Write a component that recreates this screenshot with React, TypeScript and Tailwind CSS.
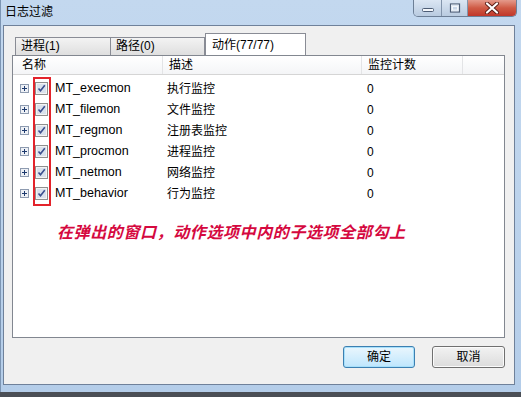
import React from 'react';

const rows = [
  { name: 'MT_execmon', desc: '执行监控', count: '0' },
  { name: 'MT_filemon', desc: '文件监控', count: '0' },
  { name: 'MT_regmon', desc: '注册表监控', count: '0' },
  { name: 'MT_procmon', desc: '进程监控', count: '0' },
  { name: 'MT_netmon', desc: '网络监控', count: '0' },
  { name: 'MT_behavior', desc: '行为监控', count: '0' },
];

function PlusBox() {
  return (
    <svg width="9" height="9" viewBox="0 0 9 9" className="shrink-0">
      <rect x="0.5" y="0.5" width="8" height="8" fill="#eef1f6" stroke="#8e9bb0" />
      <path d="M2 4.5h5M4.5 2v5" stroke="#1e3a6e" strokeWidth="1" />
    </svg>
  );
}

function CheckBox() {
  return (
    <svg width="13" height="13" viewBox="0 0 13 13" className="shrink-0">
      <rect x="0.5" y="0.5" width="12" height="12" fill="#f4f4f4" stroke="#8f8f8f" />
      <rect x="2" y="2" width="9" height="9" fill="#d9e1ec" />
      <path d="M3.5 6.5l2 2.2L9.8 3.3" stroke="#3a4f8f" strokeWidth="1.6" fill="none" />
    </svg>
  );
}

export default function App() {
  return (
    <div className="w-[521px] h-[397px] bg-[#4a4e55] overflow-hidden font-['Liberation_Sans','Noto_Sans_CJK_SC',sans-serif] text-[12px] text-black">
      <div className="h-[392px] bg-gradient-to-b from-[#c3d8ef] via-[#bcd3ec] to-[#b4cde9] border-l border-[#7c95b3]">
        {/* title bar */}
        <div className="h-[25px] flex justify-between">
          <div className="pl-[4px] pt-[5px] leading-[15px] text-[12px]">日志过滤</div>
          <div className="flex h-[17px] mr-[4px] rounded-b-[5px] overflow-hidden border border-t-0 border-[#6d7f96]">
            <div className="w-[28px] flex items-center justify-center bg-gradient-to-b from-[#dbe6f3] to-[#b9cbe0] border-r border-[#8294ab]">
              <svg width="14" height="10" viewBox="0 0 14 10">
                <rect x="1.5" y="5.5" width="11" height="3" rx="1" fill="#f4f7fb" stroke="#4d5d75" />
              </svg>
            </div>
            <div className="w-[26px] flex items-center justify-center bg-gradient-to-b from-[#dbe6f3] to-[#b9cbe0] border-r border-[#8294ab]">
              <svg width="12" height="10" viewBox="0 0 12 10">
                <rect x="1.5" y="1" width="9" height="8" fill="none" stroke="#4d5d75" strokeWidth="1.2" />
                <rect x="3.5" y="3.5" width="5" height="3.5" fill="none" stroke="#f4f7fb" />
                <rect x="2.5" y="2" width="7" height="6" fill="none" stroke="#f4f7fb" strokeWidth="0.6" />
              </svg>
            </div>
            <div className="w-[48px] flex items-center justify-center bg-gradient-to-b from-[#e49a8b] via-[#cf5a44] to-[#c0362a]">
              <svg width="16" height="12" viewBox="0 0 16 12">
                <path d="M3 1.5l10 9M13 1.5l-10 9" stroke="#5a1e17" strokeWidth="4" strokeLinecap="round" />
                <path d="M3 1.5l10 9M13 1.5l-10 9" stroke="#ffffff" strokeWidth="2.2" strokeLinecap="round" />
              </svg>
            </div>
          </div>
        </div>

        {/* client area */}
        <div className="ml-[2px] w-[512px] h-[360px] bg-[#f0f0f0] border border-[#6f819a] pt-[7px] pl-[8px] flex flex-col">
          {/* tabs */}
          <div className="h-[22px] flex items-end pl-[3px]">
            <div className="w-[96px] h-[18px] border border-b-0 border-[#898c95] bg-gradient-to-b from-[#f3f3f3] to-[#dfdfdf] pl-[5px] leading-[17px]">
              进程(1)
            </div>
            <div className="w-[94px] h-[18px] border border-b-0 border-l-0 border-[#898c95] bg-gradient-to-b from-[#f3f3f3] to-[#dfdfdf] pl-[5px] leading-[17px]">
              路径(0)
            </div>
            <div className="w-[101px] h-[23px] -mb-px relative border border-b-0 border-[#898c95] bg-white pl-[6px] pt-[3px] leading-[16px]">
              动作(77/77)
            </div>
          </div>

          {/* list view */}
          <div className="relative w-[493px] h-[283px] bg-white border border-[#828790]">
            <div className="h-[19px] flex bg-gradient-to-b from-white to-[#f4f5f7] border-b border-[#d5d5d5] leading-[18px]">
              <div className="w-[150px] pl-[9px] border-r border-[#e3e4e6]">名称</div>
              <div className="w-[199px] pl-[6px] border-r border-[#e3e4e6]">描述</div>
              <div className="w-[101px] pl-[6px] border-r border-[#e3e4e6]">监控计数</div>
              <div className="flex-1" />
            </div>

            <div className="pt-[3px]">
              {rows.map((r) => (
                <div key={r.name} className="h-[21px] flex items-center">
                  <div className="w-[150px] flex items-center pl-[7px]">
                    <PlusBox />
                    <div className="ml-[6px]">
                      <CheckBox />
                    </div>
                    <span className="ml-[7px] text-[12.5px]">{r.name}</span>
                  </div>
                  <div className="w-[199px] pl-[4px]">{r.desc}</div>
                  <div className="w-[101px] pl-[5px]">{r.count}</div>
                </div>
              ))}
            </div>

            <div className="mt-[19px] pl-[44px] text-[16px] leading-[20px] italic font-bold tracking-[0.6px] text-[#d5093f]">
              在弹出的窗口，动作选项中内的子选项全部勾上
            </div>

            {/* red highlight around the checkboxes */}
            <div className="absolute left-[20px] top-[21px] w-[18px] h-[129px] border-2 border-[#e3232b]" />
          </div>

          {/* buttons */}
          <div className="mt-[8px] flex justify-end gap-[17px] pr-[9px]">
            <button className="w-[72px] h-[22px] rounded-[3px] border border-[#3c7fb1] bg-gradient-to-b from-[#eaf6fd] to-[#bee6fd] shadow-[inset_0_0_0_1px_#a7e0fb] leading-[20px]">
              确定
            </button>
            <button className="w-[73px] h-[22px] rounded-[3px] border border-[#707070] bg-gradient-to-b from-[#f2f2f2] to-[#dcdcdc] shadow-[inset_0_0_0_1px_#fbfbfb] leading-[20px]">
              取消
            </button>
          </div>
        </div>
      </div>
    </div>
  );
}
